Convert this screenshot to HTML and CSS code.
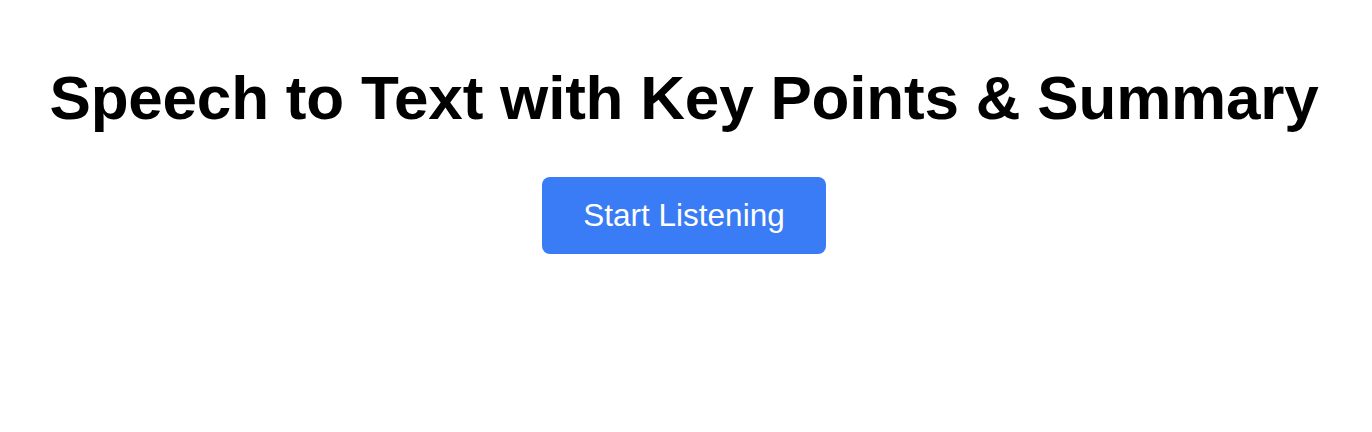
FILE: index.html
```html
<!DOCTYPE html>
<html lang="en">
<head>
    <meta charset="UTF-8">
    <meta name="viewport" content="width=device-width, initial-scale=1.0">
    <title>Speech to Text</title>
    <link rel="stylesheet" href="styles.css">
</head>
<body>
    <div class="container">
        <h1>Speech to Text with Key Points &amp; Summary</h1>
        <button id="startBtn">Start Listening</button>
    </div>
</body>
</html>
```

FILE: styles.css
```css
body {
    font-family: "Liberation Sans", Arial, sans-serif;
    background-color: #fff;
    margin: 0;
    padding: 0;
}

.container {
    display: flex;
    flex-direction: column;
    align-items: center;
    padding: 60px 4px 0 0;
}

h1 {
    font-size: 62px;
    letter-spacing: -0.2px;
    font-weight: bold;
    line-height: 76px;
    margin: 0 0 41px 0;
    color: #000;
}

button {
    background-color: #3a7bf6;
    color: white;
    font-family: "Liberation Sans", Arial, sans-serif;
    font-size: 31.5px;
    width: 284px;
    height: 77px;
    border: none;
    border-radius: 8px;
    cursor: pointer;
}

button:hover {
    background-color: #2f6ae0;
}
```
